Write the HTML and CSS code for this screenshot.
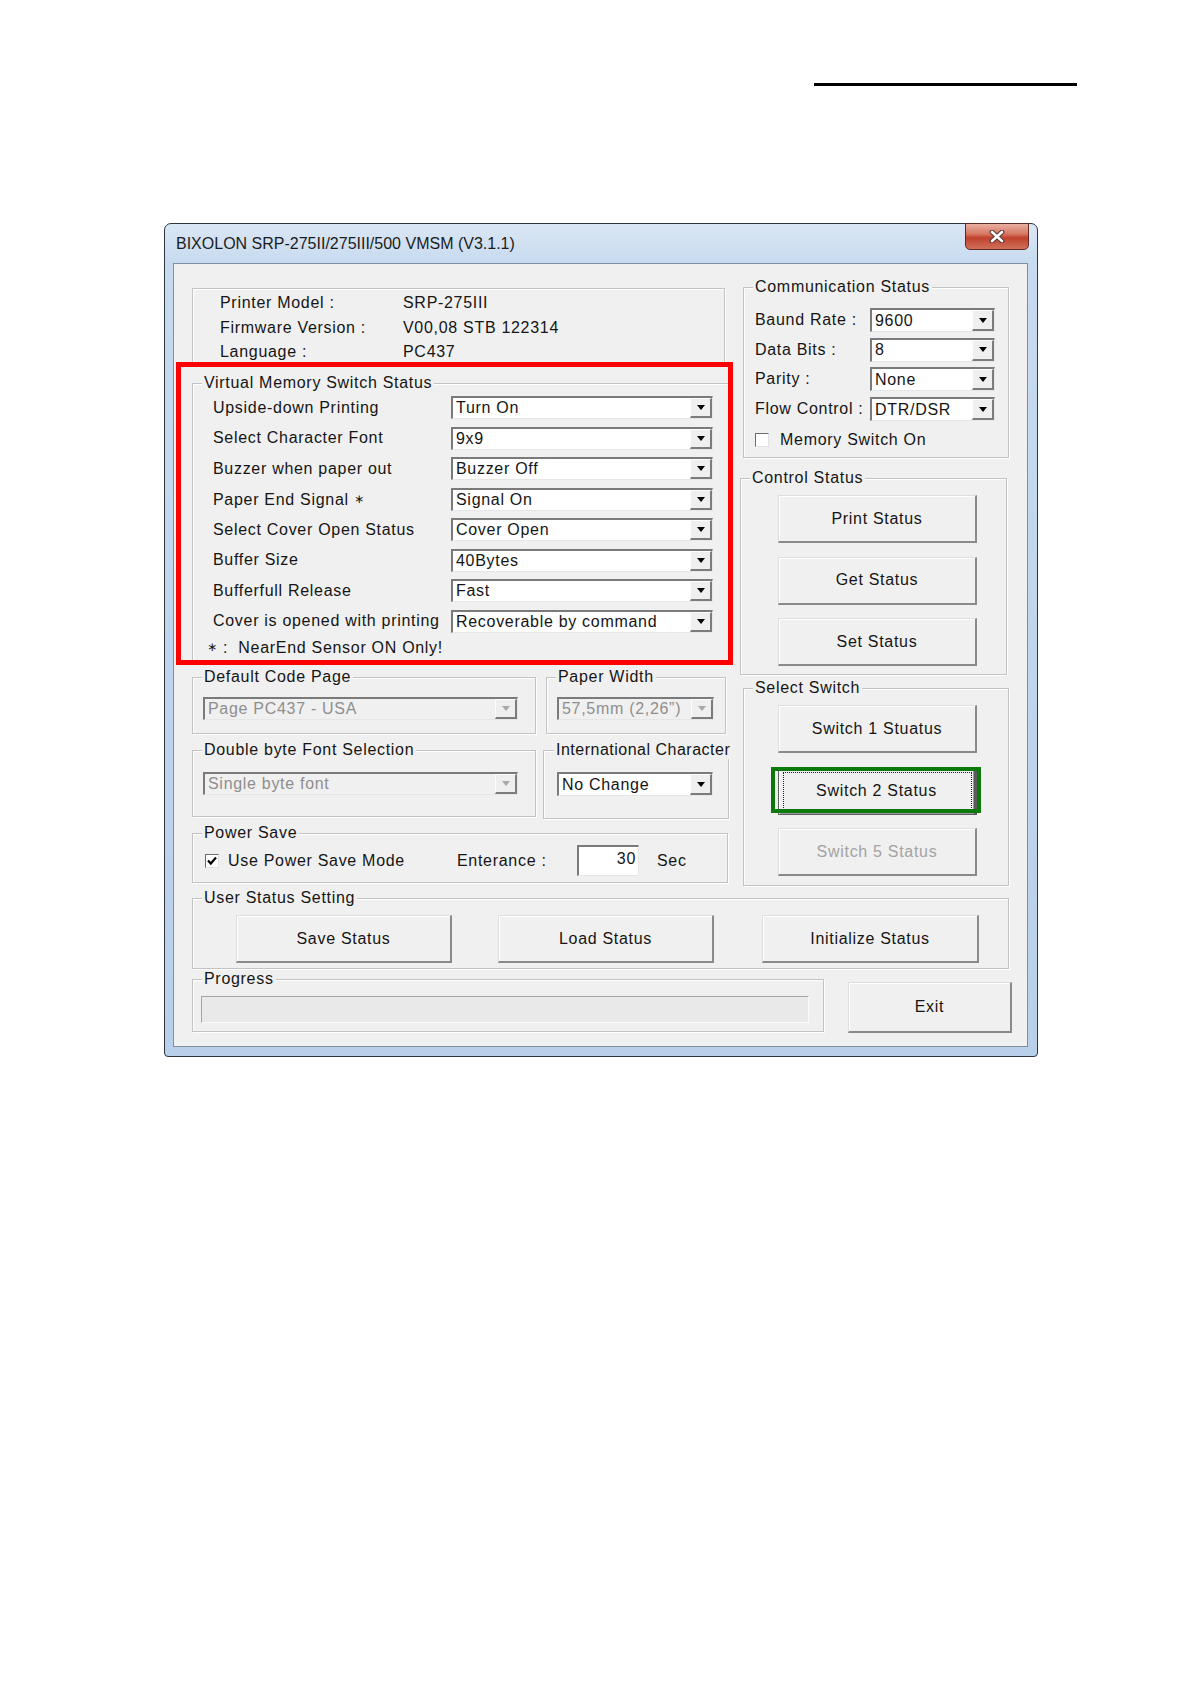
FILE: index.html
```html
<!DOCTYPE html>
<html lang="en">
<head>
	<meta charset="UTF-8">
	<title>BIXOLON SRP-275II/275III/500 VMSM</title>
	<link rel="stylesheet" href="styles.css">
</head>
<body>
	<div class="page-rule"></div>

	<div class="window">
		<div class="titlebar">
			<span class="title">BIXOLON SRP-275II/275III/500 VMSM (V3.1.1)</span>
			<span class="close-btn">
				<svg width="16" height="13" viewBox="0 0 16 13">
					<path d="M3 2 L13 11 M13 2 L3 11" stroke="#5a3a36" stroke-width="4.8" stroke-linecap="round"/>
					<path d="M3 2 L13 11 M13 2 L3 11" stroke="#fff" stroke-width="2.6" stroke-linecap="round"/>
				</svg>
			</span>
		</div>

		<div class="client">
			<div class="top">
				<!-- left column -->
				<div class="col-left">
					<div class="group info">
						<div class="info-grid">
							<span>Printer Model :</span><span>SRP-275III</span>
							<span>Firmware Version :</span><span>V00,08 STB 122314</span>
							<span>Language :</span><span>PC437</span>
						</div>
					</div>

					<div class="group vms">
						<span class="legend">Virtual Memory Switch Status</span>
						<div class="vms-grid">
							<span>Upside-down Printing</span>
							<div class="combo"><span class="combo-val">Turn On</span><span class="combo-btn"><i class="arrow"></i></span></div>
							<span>Select Character Font</span>
							<div class="combo"><span class="combo-val">9x9</span><span class="combo-btn"><i class="arrow"></i></span></div>
							<span>Buzzer when paper out</span>
							<div class="combo"><span class="combo-val">Buzzer Off</span><span class="combo-btn"><i class="arrow"></i></span></div>
							<span>Paper End Signal <span class="star">∗</span></span>
							<div class="combo"><span class="combo-val">Signal On</span><span class="combo-btn"><i class="arrow"></i></span></div>
							<span>Select Cover Open Status</span>
							<div class="combo"><span class="combo-val">Cover Open</span><span class="combo-btn"><i class="arrow"></i></span></div>
							<span>Buffer Size</span>
							<div class="combo"><span class="combo-val">40Bytes</span><span class="combo-btn"><i class="arrow"></i></span></div>
							<span>Bufferfull Release</span>
							<div class="combo"><span class="combo-val">Fast</span><span class="combo-btn"><i class="arrow"></i></span></div>
							<span>Cover is opened with printing</span>
							<div class="combo"><span class="combo-val">Recoverable by command</span><span class="combo-btn"><i class="arrow"></i></span></div>
						</div>
						<div class="note"><span class="star">∗</span> :&nbsp; NearEnd Sensor ON Only!</div>
					</div>

					<div class="row2">
						<div class="group code-page">
							<span class="legend">Default Code Page</span>
							<div class="combo disabled"><span class="combo-val">Page PC437 - USA</span><span class="combo-btn"><i class="arrow"></i></span></div>
						</div>
						<div class="group paper-width">
							<span class="legend">Paper Width</span>
							<div class="combo disabled"><span class="combo-val">57,5mm (2,26”)</span><span class="combo-btn"><i class="arrow"></i></span></div>
						</div>
					</div>

					<div class="row3">
						<div class="group dbyte">
							<span class="legend">Double byte Font Selection</span>
							<div class="combo disabled"><span class="combo-val">Single byte font</span><span class="combo-btn"><i class="arrow"></i></span></div>
						</div>
						<div class="group intl">
							<span class="legend">International Character</span>
							<div class="combo"><span class="combo-val">No Change</span><span class="combo-btn"><i class="arrow"></i></span></div>
						</div>
					</div>

					<div class="group power">
						<span class="legend">Power Save</span>
						<div class="power-row">
							<span class="ps-check">
								<span class="cb">
									<svg width="12" height="12" viewBox="0 0 12 12"><path d="M2 5.5 L4.8 8.5 L10 2.5" fill="none" stroke="#000" stroke-width="2.2"/></svg>
								</span>
								<span class="cb-label">Use Power Save Mode</span>
							</span>
							<span class="ps-ent">Enterance :</span>
							<span class="num-input">30</span>
							<span class="ps-sec">Sec</span>
						</div>
					</div>
				</div>

				<!-- right column -->
				<div class="col-right">
					<div class="group comm">
						<span class="legend">Communication Status</span>
						<div class="comm-grid">
							<span>Baund Rate :</span>
							<div class="combo tall"><span class="combo-val">9600</span><span class="combo-btn"><i class="arrow"></i></span></div>
							<span>Data Bits :</span>
							<div class="combo tall"><span class="combo-val">8</span><span class="combo-btn"><i class="arrow"></i></span></div>
							<span>Parity :</span>
							<div class="combo tall"><span class="combo-val">None</span><span class="combo-btn"><i class="arrow"></i></span></div>
							<span>Flow Control :</span>
							<div class="combo tall"><span class="combo-val">DTR/DSR</span><span class="combo-btn"><i class="arrow"></i></span></div>
						</div>
						<div class="mem-row">
							<span class="cb"></span>
							<span class="cb-label">Memory Switch On</span>
						</div>
					</div>

					<div class="group control">
						<span class="legend">Control Status</span>
						<div class="btn-stack">
							<button class="btn">Print Status</button>
							<button class="btn">Get Status</button>
							<button class="btn">Set Status</button>
						</div>
					</div>

					<div class="group select-sw">
						<span class="legend">Select Switch</span>
						<div class="btn-stack">
							<button class="btn">Switch 1 Stuatus</button>
							<button class="btn focused">Switch 2 Status</button>
							<button class="btn" disabled>Switch 5 Status</button>
						</div>
					</div>
				</div>
			</div>

			<div class="group user-status">
				<span class="legend">User Status Setting</span>
				<div class="user-btns">
					<button class="btn">Save Status</button>
					<button class="btn">Load Status</button>
					<button class="btn init">Initialize Status</button>
				</div>
			</div>

			<div class="bottom-row">
				<div class="group progress">
					<span class="legend">Progress</span>
					<div class="progress-bar"></div>
				</div>
				<button class="btn exit">Exit</button>
			</div>

			<div class="mark-red"></div>
			<div class="mark-green"></div>
		</div>
	</div>
</body>
</html>
```

FILE: styles.css
```css
* {
	margin: 0;
	padding: 0;
	box-sizing: border-box;
}
body {
	background: #fff;
	font-family: "Liberation Sans", Arial, "DejaVu Sans", sans-serif;
	font-size: 16px;
	letter-spacing: 0.7px;
	line-height: 18px;
	color: #151515;
	padding-top: 83px;
}
.page-rule {
	margin-left: 814px;
	width: 263px;
	height: 3px;
	background: #000;
}

/* window frame */
.window {
	margin: 137px 0 0 164px;
	width: 874px;
	border: 1px solid #2c3540;
	border-radius: 7px 7px 4px 4px;
	background: linear-gradient(#dae7f5, #c7daef 40px, #b9d0ea);
	padding: 0 9px 9px 8px;
}
.titlebar {
	height: 39px;
	display: flex;
	align-items: center;
	padding-left: 3px;
}
.title {
	color: #1c1c1c;
	letter-spacing: 0;
}
.close-btn {
	margin: -1px -1px 0 auto;
	align-self: flex-start;
	width: 64px;
	height: 27px;
	border: 1px solid #5e2a22;
	border-radius: 0 0 5px 5px;
	background: linear-gradient(#eab0a2, #d67763 40%, #c0412c 55%, #d0705a);
	display: flex;
	align-items: center;
	justify-content: center;
}
.client {
	position: relative;
	background: #f0f0f0;
	border: 1px solid #7e8e9f;
	padding: 24px 0 13px 18px;
}

/* group boxes */
.group {
	border: 1px solid #c3c3c3;
	box-shadow: inset 1px 1px 0 #fff, 1px 1px 0 #fff;
}
.legend {
	display: block;
	width: max-content;
	margin: -10px 0 0 9px;
	padding: 0 2px;
	background: #f0f0f0;
	line-height: 18px;
	white-space: nowrap;
}
.top {
	display: flex;
}
.col-left {
	width: 544px;
	display: flex;
	flex-direction: column;
}
.col-right {
	width: 269px;
	margin-left: 4px;
	display: flex;
	flex-direction: column;
}

.info {
	width: 533px;
	height: 77px;
	padding: 2px 0 0 27px;
}
.info-grid {
	display: grid;
	grid-template-columns: 183px auto;
	line-height: 24.5px;
}

.vms {
	width: 538px;
	height: 280px;
	margin-top: 18px;
}
.vms-grid {
	display: grid;
	grid-template-columns: 238px 262px;
	grid-auto-rows: 23px;
	row-gap: 7.5px;
	align-items: center;
	margin: 4px 0 0 20px;
}
.note {
	margin: 5px 0 0 14px;
}
.star {
	font-family: "DejaVu Sans", sans-serif;
	font-size: 12px;
	vertical-align: 2px;
}

/* combo boxes */
.combo {
	display: flex;
	height: 23px;
	background: #fff;
	border-style: solid;
	border-width: 2px 1px 1px 2px;
	border-color: #7a7a7a #e6e6e6 #e6e6e6 #7a7a7a;
}
.combo.tall {
	height: 24px;
}
.combo-val {
	flex: 1;
	padding-left: 3px;
	white-space: nowrap;
	overflow: hidden;
	display: flex;
	align-items: center;
}
.combo-btn {
	width: 22px;
	background: #efefef;
	border-style: solid;
	border-width: 1px 2px 2px 1px;
	border-color: #fdfdfd #7c7c7c #7c7c7c #fdfdfd;
	display: flex;
	align-items: center;
	justify-content: center;
}
.arrow {
	width: 0;
	height: 0;
	border-left: 4.5px solid transparent;
	border-right: 4.5px solid transparent;
	border-top: 5px solid #000;
}
.combo.disabled {
	background: #f0f0f0;
	color: #8e8e8e;
}
.combo.disabled .arrow {
	border-top-color: #a8a8a8;
}

.row2 {
	display: flex;
	margin-top: 14px;
}
.code-page, .dbyte {
	width: 344px;
}
.code-page {
	height: 57px;
}
.code-page .combo {
	width: 315px;
	margin: 11px 0 0 10px;
}
.paper-width {
	width: 180px;
	height: 57px;
	margin-left: 10px;
}
.paper-width .combo {
	width: 157px;
	margin: 11px 0 0 10px;
}
.row3 {
	display: flex;
	align-items: flex-start;
	margin-top: 16px;
}
.dbyte {
	height: 67px;
}
.dbyte .combo {
	width: 315px;
	margin: 13px 0 0 10px;
}
.intl {
	width: 186px;
	height: 69px;
	margin-left: 7px;
}
.intl .legend {
	margin-left: 10px;
	letter-spacing: 0.5px;
}
.intl .combo {
	width: 156px;
	height: 24px;
	margin: 13px 0 0 13px;
}

.power {
	width: 536px;
	height: 50px;
	margin-top: 14px;
}
.power-row {
	display: flex;
	align-items: center;
	height: 31px;
	margin-top: 3px;
	padding-left: 12px;
}
.ps-check {
	width: 252px;
	display: flex;
	align-items: center;
}
.cb {
	width: 14px;
	height: 14px;
	background: #fff;
	border: 1px solid;
	border-color: #6c6c6c #e2e2e2 #e2e2e2 #6c6c6c;
	display: flex;
	align-items: center;
	justify-content: center;
	flex: none;
}
.cb-label {
	margin-left: 9px;
}
.ps-ent {
	width: 120px;
}
.num-input {
	width: 62px;
	height: 31px;
	background: #fff;
	border-style: solid;
	border-width: 2px 1px 1px 2px;
	border-color: #7a7a7a #e6e6e6 #e6e6e6 #7a7a7a;
	text-align: right;
	padding: 3px 2px 0 0;
}
.ps-sec {
	margin-left: 18px;
}

.comm {
	width: 266px;
	height: 171px;
	margin: -1px 0 0 3px;
}
.comm-grid {
	display: grid;
	grid-template-columns: 115px 125px;
	grid-auto-rows: 24px;
	row-gap: 5.7px;
	align-items: center;
	margin: 12px 0 0 11px;
}
.mem-row {
	display: flex;
	align-items: center;
	height: 18px;
	margin: 10px 0 0 11px;
}
.mem-row .cb-label {
	margin-left: 11px;
}

/* buttons */
.btn {
	font: inherit;
	letter-spacing: inherit;
	color: #151515;
	width: 199px;
	height: 48px;
	background: #f0f0f0;
	border-style: solid;
	border-width: 1px 2px 2px 1px;
	border-color: #dedede #8a8a8a #8a8a8a #dedede;
	box-shadow: inset 1px 1px 0 #fff;
}
.btn:disabled {
	color: #a3a3a3;
}
.btn.focused {
	border: 1px solid #5c5c5c;
	border-right-width: 3px;
	box-shadow: inset 1px 1px 0 #fff, inset -1px -1px 0 #9a9a9a;
	outline: 1px dotted #222;
	outline-offset: -6px;
}
.btn-stack {
	display: flex;
	flex-direction: column;
	gap: 13.5px;
	margin-top: 8px;
}
.control {
	width: 267px;
	height: 197px;
	margin-top: 20px;
}
.control .btn-stack {
	margin-left: 37px;
}
.select-sw {
	width: 266px;
	height: 198px;
	margin: 13px 0 0 3px;
}
.select-sw .btn-stack {
	margin-left: 34px;
}

.user-status {
	width: 817px;
	height: 71px;
	margin-top: 12px;
}
.user-btns {
	display: flex;
	gap: 46px;
	margin: 8px 0 0 43px;
}
.user-btns .btn {
	width: 216px;
}
.user-btns .btn.init {
	width: 217px;
	margin-left: 2px;
}

.bottom-row {
	display: flex;
	align-items: flex-start;
	margin-top: 10px;
}
.progress {
	width: 632px;
	height: 53px;
}
.progress-bar {
	width: 608px;
	height: 27px;
	margin: 8px 0 0 8px;
	background: #e9e9e9;
	border: 1px solid;
	border-color: #a4a4a4 #fbfbfb #fbfbfb #a4a4a4;
}
.btn.exit {
	width: 164px;
	height: 51px;
	margin: 3px 0 0 24px;
}

/* annotation frames */
.mark-red {
	position: absolute;
	left: 2px;
	top: 98px;
	width: 557px;
	height: 303px;
	border: 5px solid #f00;
}
.mark-green {
	position: absolute;
	left: 597px;
	top: 503px;
	width: 210px;
	height: 46px;
	border: 4px solid #0b7a0b;
}
```
